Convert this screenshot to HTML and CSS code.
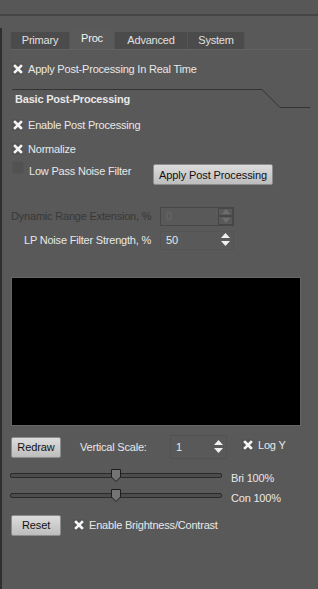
FILE: index.html
```html
<!DOCTYPE html>
<html lang="en">
<head>
  <meta charset="UTF-8">
  <title>Proc</title>
  <link rel="stylesheet" href="styles.css">
</head>
<body>
  <div class="topbar"></div>
  <div class="panel">
    <!-- Tabs -->
    <div class="tabs">
      <div class="tab tab-primary">Primary</div>
      <div class="tab active">Proc</div>
      <div class="tab tab-adv">Advanced</div>
      <div class="tab tab-sys">System</div>
    </div>

    <div class="row row-realtime">
      <span class="check on"><svg viewBox="0 0 10 10"><path d="M2 2L8 8M8 2L2 8"/></svg></span>
      <span>Apply Post-Processing In Real Time</span>
    </div>

    <!-- Group -->
    <div class="group-head">
      <div class="group-line"><span class="group-title">Basic Post-Processing</span></div>
      <svg class="group-slope" width="48" height="20" viewBox="0 0 48 20"><path d="M0 0.5L18 18.5L48 18.5"/></svg>
    </div>

    <div class="row row-enable">
      <span class="check on"><svg viewBox="0 0 10 10"><path d="M2 2L8 8M8 2L2 8"/></svg></span>
      <span>Enable Post Processing</span>
    </div>
    <div class="row row-norm">
      <span class="check on"><svg viewBox="0 0 10 10"><path d="M2 2L8 8M8 2L2 8"/></svg></span>
      <span>Normalize</span>
    </div>
    <div class="row row-lowpass">
      <span class="check off"></span>
      <span class="lp-label">Low Pass Noise Filter</span>
      <button class="btn btn-apply">Apply Post Processing</button>
    </div>

    <div class="row row-dre">
      <span class="field-label disabled">Dynamic Range Extension, %</span>
      <div class="spin spin-disabled">
        <span class="spin-value">0</span>
        <div class="spin-btns">
          <span class="spin-btn"><svg width="8" height="5" viewBox="0 0 8 5"><path d="M0 5L4 0L8 5Z"/></svg></span>
          <span class="spin-btn"><svg width="8" height="5" viewBox="0 0 8 5"><path d="M0 0L8 0L4 5Z"/></svg></span>
        </div>
      </div>
    </div>
    <div class="row row-lp">
      <span class="field-label lp-strength">LP Noise Filter Strength, %</span>
      <div class="spin">
        <span class="spin-value">50</span>
        <div class="spin-btns">
          <span class="spin-btn"><svg width="9" height="5" viewBox="0 0 9 5"><path d="M0 5L4.5 0L9 5Z"/></svg></span>
          <span class="spin-btn"><svg width="9" height="5" viewBox="0 0 9 5"><path d="M0 0L9 0L4.5 5Z"/></svg></span>
        </div>
      </div>
    </div>

    <div class="plot"></div>

    <div class="row row-redraw">
      <button class="btn btn-small">Redraw</button>
      <span class="vs-label">Vertical Scale:</span>
      <div class="spin spin-scale">
        <span class="spin-value">1</span>
        <div class="spin-btns">
          <span class="spin-btn"><svg width="9" height="5" viewBox="0 0 9 5"><path d="M0 5L4.5 0L9 5Z"/></svg></span>
          <span class="spin-btn"><svg width="9" height="5" viewBox="0 0 9 5"><path d="M0 0L9 0L4.5 5Z"/></svg></span>
        </div>
      </div>
      <span class="check on logy"><svg viewBox="0 0 10 10"><path d="M2 2L8 8M8 2L2 8"/></svg></span>
      <span class="logy">Log Y</span>
    </div>

    <div class="slider-row slider-first">
      <div class="slider">
        <div class="groove"></div>
        <svg class="handle" width="12" height="13" viewBox="0 0 12 13"><path d="M1.5 0.5H10.5V8L6 12.5L1.5 8Z"/></svg>
      </div>
      <span class="slider-label">Bri 100%</span>
    </div>
    <div class="slider-row">
      <div class="slider">
        <div class="groove"></div>
        <svg class="handle" width="12" height="13" viewBox="0 0 12 13"><path d="M1.5 0.5H10.5V8L6 12.5L1.5 8Z"/></svg>
      </div>
      <span class="slider-label">Con 100%</span>
    </div>

    <div class="row row-reset">
      <button class="btn btn-small">Reset</button>
      <span class="check on"><svg viewBox="0 0 10 10"><path d="M2 2L8 8M8 2L2 8"/></svg></span>
      <span>Enable Brightness/Contrast</span>
    </div>
  </div>
</body>
</html>
```

FILE: styles.css
```css
/* Dark Qt-style panel */
body {
  margin: 0;
  background: #595959;
  color: #e8e8e8;
  font-family: "Liberation Sans", Arial, sans-serif;
  font-size: 11px;
  letter-spacing: -0.2px;
  white-space: nowrap;
}

.topbar {
  height: 14px;
  border-bottom: 2px solid #454545;
  background: #575757;
}

.panel {
  margin-top: 12px;
  min-height: 559px;
  border-left: 2px solid #2f2f2f;
  padding-top: 2px;
}

/* Tabs */
.tabs {
  display: flex;
  align-items: flex-end;
  margin-left: 9px;
  margin-right: 6px;
  height: 19px;
  border-bottom: 1px solid #626262;
}

.tab {
  height: 17px;
  line-height: 17px;
  background: #4b4b4b;
  border-right: 1px solid #555;
  color: #e0e0e0;
  text-align: center;
}

.tab-primary { width: 58px; }
.tab-adv { width: 72px; }
.tab-sys { width: 56px; }

.tab.active {
  width: 44px;
  height: 19px;
  line-height: 16px;
  background: #5a5a5a;
  color: #f2f2f2;
}

/* Rows */
.row {
  display: flex;
  align-items: center;
  padding-left: 10px;
}

.row-realtime { height: 22px; margin-top: 8px; }

.check {
  width: 11px;
  height: 12px;
  margin-right: 5px;
  background: #545454;
  display: inline-flex;
  align-items: center;
  justify-content: center;
}

.check svg {
  width: 10px;
  height: 10px;
}

.check svg path {
  stroke: #f4f4f4;
  stroke-width: 2.6;
  stroke-linecap: square;
  fill: none;
}

.check.off {
  background: #525252;
  border: 1px solid #565656;
  width: 10px;
  height: 11px;
}

/* Group header */
.group-head {
  display: flex;
  margin: 9px 8px 0 10px;
  height: 20px;
}

.group-line {
  flex: 1;
  border-top: 1px solid #333;
}

.group-title {
  display: block;
  font-weight: bold;
  padding: 3px 0 0 3px;
}

.group-slope path {
  stroke: #333;
  stroke-width: 1;
  fill: none;
}

.row-enable { height: 24px; margin-top: 4px; }
.row-norm { height: 24px; }
.row-lowpass { height: 23px; align-items: flex-start; }

.lp-label { margin-top: 4px; width: 124px; }

.btn {
  font-family: "Liberation Sans", Arial, sans-serif;
  font-size: 11px;
  letter-spacing: -0.1px;
  color: #111;
  background: linear-gradient(#dcdcdc, #bdbdbd);
  border: 1px solid #8c8c8c;
  border-radius: 2px;
  padding: 0;
  height: 21px;
  white-space: nowrap;
}

.btn-apply {
  width: 120px;
  margin-top: 3px;
}

/* Spin boxes */
.row-dre { height: 24px; margin-top: 20px; padding-left: 9px; }
.row-lp { height: 24px; padding-left: 22px; }

.field-label.disabled { color: #383838; width: 149px; }
.lp-strength { width: 136px; }

.spin {
  display: flex;
  align-items: center;
  width: 74px;
  height: 19px;
  border: 1px solid #545454;
  box-sizing: border-box;
}

.spin-value {
  flex: 1;
  padding-left: 5px;
}

.spin-btns {
  display: flex;
  flex-direction: column;
  width: 15px;
  height: 100%;
  justify-content: center;
  gap: 2px;
}

.spin-btn {
  display: flex;
  justify-content: center;
  height: 6px;
}

.spin svg path { fill: #f0f0f0; }

.spin-disabled { border-color: #474747; }
.spin-disabled .spin-value { color: #686868; }
.spin-disabled .spin-btns { gap: 0; }
.spin-disabled .spin-btn {
  height: 8px;
  align-items: center;
  border: 1px solid #474747;
}
.spin-disabled svg path { fill: #6e6e6e; }

/* Plot */
.plot {
  height: 147px;
  margin: 25px 17px 0 9px;
  background: #000;
  border: 1px solid #666;
}

/* Bottom controls */
.row-redraw { height: 24px; margin-top: 9px; padding-left: 9px; }

.btn-small { width: 50px; }

.vs-label { margin-left: 19px; width: 90px; }

.spin-scale {
  width: 57px;
  height: 24px;
  border-color: #525252;
  margin-right: 15px;
}

.logy { margin-top: -4px; }

.slider-row {
  display: flex;
  align-items: center;
  height: 20px;
  padding-left: 8px;
}

.slider-first { margin-top: 6px; }

.slider {
  position: relative;
  width: 212px;
  height: 16px;
  display: flex;
  align-items: center;
  margin-right: 9px;
}

.groove {
  width: 100%;
  height: 3px;
  background: #4c4c4c;
  border: 1px solid #2a2a2a;
  border-radius: 2px;
}

.handle {
  position: absolute;
  left: 100px;
  top: 2px;
}

.handle path {
  fill: #747474;
  stroke: #1e1e1e;
  stroke-width: 1;
}

.slider-label { margin-top: 5px; }

.row-reset { height: 24px; margin-top: 8px; padding-left: 9px; }
.row-reset .btn { margin-right: 12px; }
```
